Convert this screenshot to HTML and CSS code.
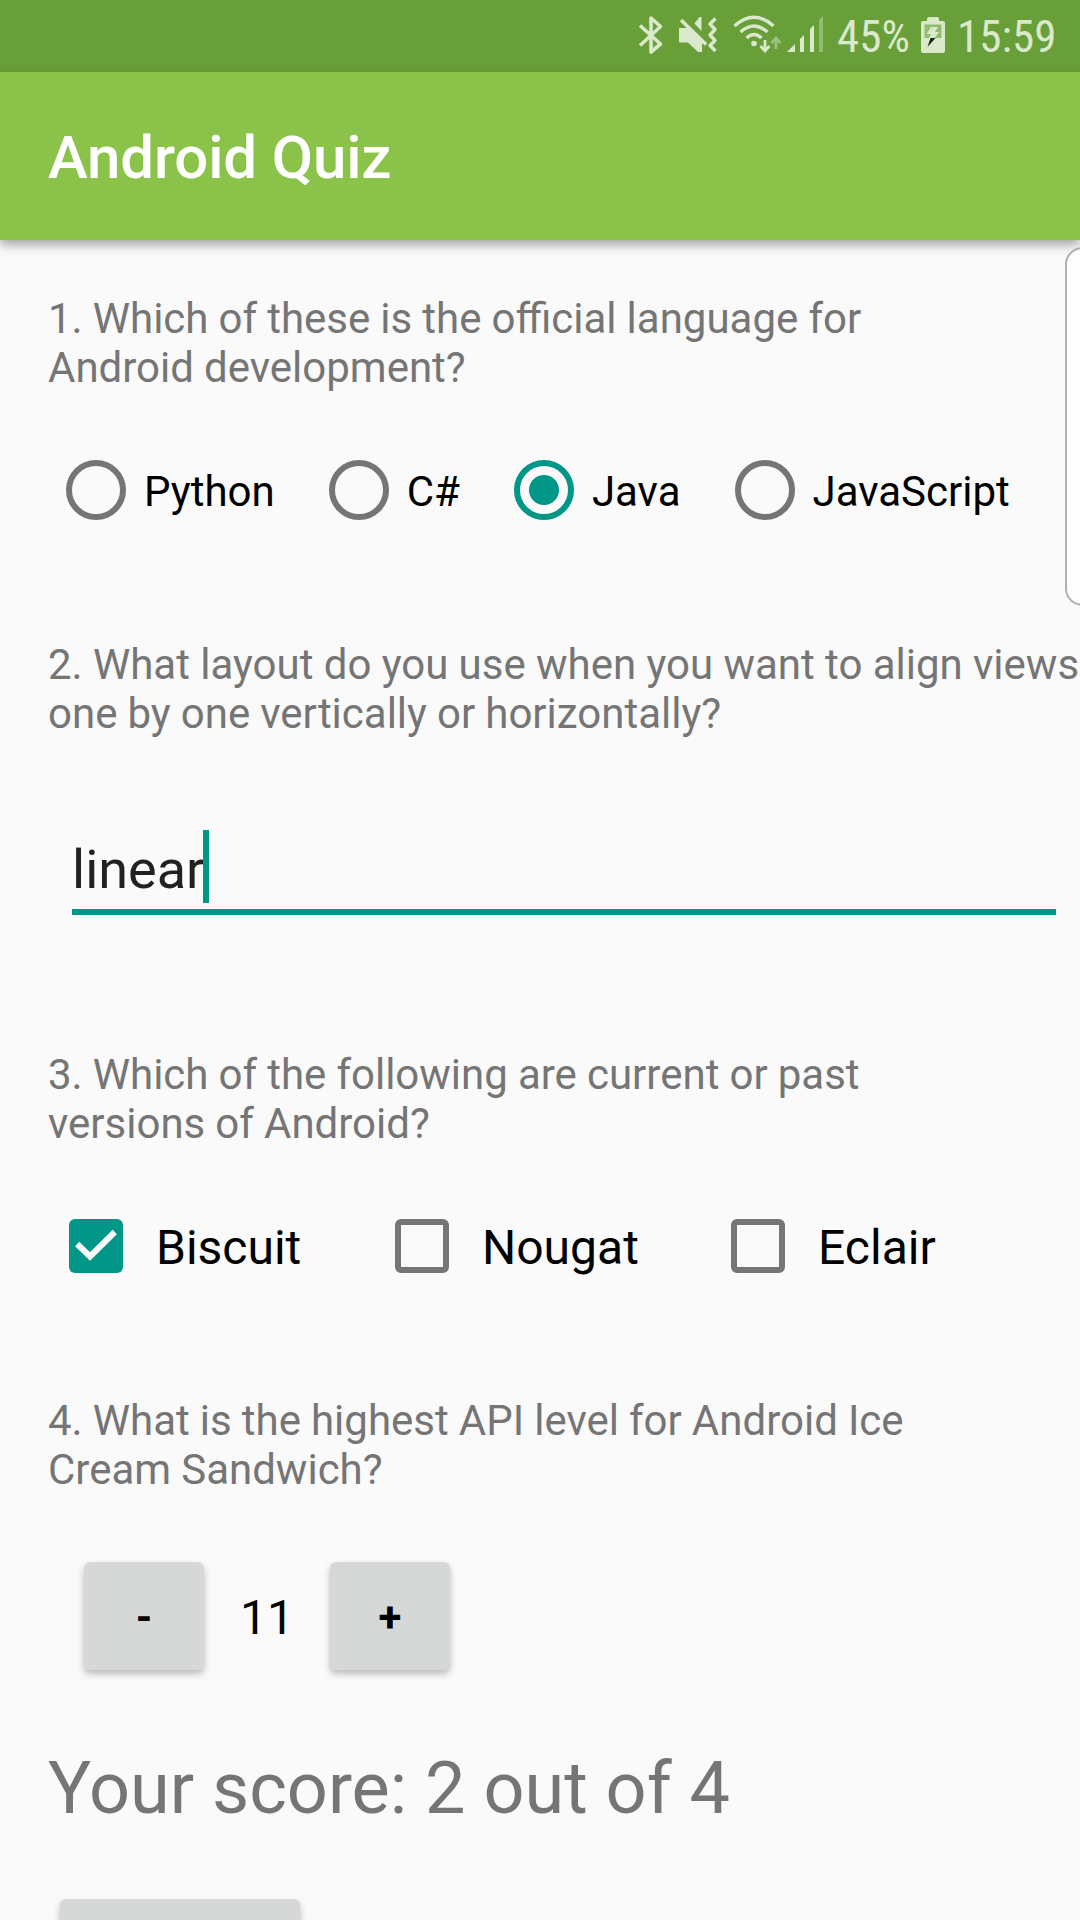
FILE: index.html
```html
<!DOCTYPE html>
<html lang="en">
<head>
<meta charset="utf-8">
<title>Android Quiz</title>
<link rel="stylesheet" href="styles.css">
</head>
<body>
<div class="screen">
  <div class="status-bar">
    <svg class="icon-bluetooth" width="26" height="40" viewBox="0 0 26 40" fill="none" stroke="#dae8cc" stroke-width="3.6" stroke-linejoin="round">
      <path d="M2 10.5 22.5 29 13 37V3l9.500 8.500L2 30.500"/>
    </svg>
    <svg class="icon-mute" width="40" height="40" viewBox="0 0 40 40" fill="#dae8cc">
      <path d="M2 13h9l13 12.500V37h-4L10 27.500H2Q1 27.500 1 26.500V14Q1 13 2 13Z"/>
      <path d="M23.500 2v14l-7-7.500 5-6.500Z"/>
      <path d="M3 5 28 29.500" fill="none" stroke="#dae8cc" stroke-width="3.600"/>
      <path d="M37.500 3.500 32 9l5 5.500-5 5.500 5 5.500-5 5 5.500 5.500" fill="none" stroke="#dae8cc" stroke-width="3.400" stroke-linejoin="round"/>
    </svg>
    <svg class="icon-wifi" width="50" height="40" viewBox="0 0 50 40" fill="none" stroke="#dae8cc" stroke-width="3.400">
      <path d="M1.500 11Q21 -6.500 40.500 11M7.500 17Q21 5 34.500 17M13.500 23Q21 16 28.500 23"/>
      <circle cx="21" cy="28.500" r="2.800" fill="#dae8cc" stroke="none"/>
      <path d="M32 25v11M27.500 31l4.500 5 4.500-5" stroke-width="2.800"/>
      <path d="M43 34V23M38.500 28l4.500-5 4.500 5" stroke="#9bc17b" stroke-width="2.800"/>
    </svg>
    <svg class="icon-signal" width="37" height="40" viewBox="0 0 37 40" fill="#dae8cc">
      <path d="M0 38 8 30v8ZM13 38V25l4-4v17ZM23 38V15l4-4v27Z"/>
      <path d="M32 38V6l4-4v36Z" fill="#92bc70"/>
    </svg>
    <span class="status-text battery-level">45%</span>
    <svg class="icon-battery" width="24" height="36" viewBox="0 0 24 36">
      <path d="M2 4h4V2Q6 0 8 0h8q2 0 2 2v2h4q2 0 2 2v28q0 2-2 2H2q-2 0-2-2V6q0-2 2-2Z" fill="#dae8cc"/>
      <path d="M3.500 7.500h17V21h-17Z" fill="#92bc70"/>
      <path d="M10 10h7l-3 5h4l-4.500 6H8l2-4H5.500Z" fill="#dae8cc"/>
      <path d="M9.500 21h5L6.500 30Z" fill="#18270c"/>
    </svg>
    <span class="status-text clock">15:59</span>
  </div>

  <header class="app-bar"><h1 class="app-title">Android Quiz</h1></header>

  <main class="quiz">
    <p class="question">1. Which of these is the official language for<br>Android development?</p>
    <div class="radio-group">
      <label class="radio"><span class="radio-dot"></span><span class="option-label">Python</span></label>
      <label class="radio"><span class="radio-dot"></span><span class="option-label">C#</span></label>
      <label class="radio"><span class="radio-dot radio-dot-on"></span><span class="option-label">Java</span></label>
      <label class="radio"><span class="radio-dot"></span><span class="option-label">JavaScript</span></label>
    </div>

    <p class="question question-spaced"><span class="question-wide-line">2. What layout do you use when you want to align views</span><br>one by one vertically or horizontally?</p>
    <div class="text-field"><span>linear</span><span class="cursor"></span></div>

    <p class="question question-after-field">3. Which of the following are current or past<br>versions of Android?</p>
    <div class="check-group">
      <label class="check"><span class="check-box check-box-on">
        <svg width="54" height="54" viewBox="0 0 54 54" fill="none" stroke="#fafafa" stroke-width="6"><path d="M8.200 25 21 37.500 45.800 13"/></svg>
      </span><span class="option-label">Biscuit</span></label>
      <label class="check"><span class="check-box"></span><span class="option-label">Nougat</span></label>
      <label class="check"><span class="check-box"></span><span class="option-label">Eclair</span></label>
    </div>

    <p class="question question-spaced">4. What is the highest API level for Android Ice<br>Cream Sandwich?</p>
    <div class="stepper">
      <button class="button">-</button>
      <span class="stepper-value">11</span>
      <button class="button">+</button>
    </div>

    <p class="score">Your score: 2 out of 4</p>
    <button class="button button-submit"></button>
  </main>

  <div class="edge-handle"></div>
</div>
</body>
</html>
```
FILE: styles.css
```css
* {
  box-sizing: border-box;
}

body {
  margin: 0;
  font-family: Roboto, "Liberation Sans", sans-serif;
  background: #fafafa;
}

p,
h1 {
  margin: 0;
}

.screen {
  position: relative;
  display: flex;
  flex-direction: column;
  width: 1080px;
  height: 1920px;
  overflow: hidden;
}

.status-bar {
  display: flex;
  flex: none;
  align-items: flex-start;
  height: 72px;
  padding-left: 638px;
  background: #689f38;
}

.status-bar svg {
  flex: none;
  margin-top: 15px;
}

.icon-mute {
  margin-left: 14px;
}

.icon-wifi {
  margin-left: 15px;
}

.icon-signal {
  margin-left: 4px;
}

.status-bar .icon-signal {
  margin-top: 14px;
}

.status-bar .icon-battery {
  margin-top: 17px;
}

.status-text {
  flex: none;
  margin-top: 10px;
  color: #dae8cc;
  font-family: "Roboto Condensed", Roboto, sans-serif;
  font-size: 45px;
  font-stretch: 75%;
  line-height: 53px;
  white-space: nowrap;
}

.battery-level {
  width: 84px;
  margin-left: 13px;
}

.clock {
  margin-left: 12px;
}

.app-bar {
  display: flex;
  z-index: 1;
  flex: none;
  align-items: center;
  height: 168px;
  padding: 4px 48px 0;
  background: #8bc34a;
  box-shadow: 0 5px 10px rgba(0, 0, 0, 0.34);
}

.app-title {
  color: #fff;
  font-size: 60px;
  font-weight: 500;
  letter-spacing: -0.15px;
  line-height: 70px;
}

.quiz {
  display: flex;
  flex-direction: column;
  align-items: flex-start;
  padding: 54px 0 0 48px;
}

.question {
  color: #757575;
  font-size: 42px;
  word-spacing: -0.35px;
  line-height: 49px;
  white-space: nowrap;
}

.question-wide-line {
  word-spacing: -0.12px;
}

.question-spaced {
  margin-top: 102px;
}

.question-after-field {
  margin-top: 135px;
}

.radio-group,
.check-group {
  height: 96px;
  margin-top: 50px;
}

.radio-group {
  display: flex;
  gap: 36px;
}

.check-group {
  display: grid;
  grid-template-columns: 326px 336px auto;
}

.radio,
.check {
  display: flex;
  align-items: center;
  white-space: nowrap;
}

.radio {
  font-size: 42px;
}

.check {
  font-size: 48px;
}

.option-label {
  padding-top: 2px;
}

.radio-dot {
  width: 60px;
  height: 60px;
  margin: 0 18px;
  border: 6px solid #757575;
  border-radius: 50%;
}

.radio-dot-on {
  border-color: #009688;
  background: radial-gradient(circle, #009688 14.500px, transparent 15.500px);
}

.check-box {
  width: 54px;
  height: 54px;
  margin: 0 33px 0 21px;
  border: 6px solid #757575;
  border-radius: 6px;
}

.check-box-on {
  border: 0;
  background: #009688;
}

.check-box svg {
  display: block;
}

.text-field {
  display: flex;
  width: 984px;
  height: 85px;
  margin: 92px 0 0 24px;
  border-bottom: 6px solid #009688;
  color: #212121;
  font-size: 54px;
  line-height: 79px;
}

.cursor {
  width: 6px;
  height: 73px;
  margin-left: -1px;
  background: #009688;
}

.stepper {
  display: flex;
  align-items: center;
  gap: 36px;
  margin: 68px 0 0 36px;
}

.button {
  width: 120px;
  height: 108px;
  padding: 2px 0 0;
  border: 0;
  border-radius: 6px;
  background: #d6d8d7;
  box-shadow: 0 4px 7px rgba(0, 0, 0, 0.25);
  color: #000;
  font-family: inherit;
  font-size: 42px;
  font-weight: 700;
}

.stepper-value {
  padding-top: 2px;
  font-size: 48px;
}

.score {
  margin-top: 77px;
  color: #757575;
  font-size: 72px;
  line-height: 84px;
}

.button-submit {
  flex: none;
  width: 240px;
  margin: 68px 0 0 12px;
}

.edge-handle {
  position: absolute;
  z-index: 2;
  top: 247px;
  right: -20px;
  width: 35px;
  height: 359px;
  border: 2px solid #b0b0b0;
  border-radius: 20px;
  background: #fefefe;
}
```
